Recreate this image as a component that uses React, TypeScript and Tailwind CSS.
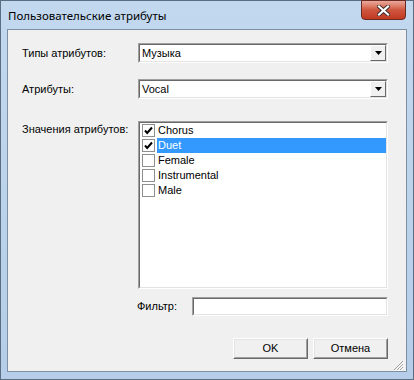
import React from "react";

const F = { fontFamily: '"Liberation Sans", Arial, sans-serif' };

function Sunken({ className = "", children }: { className?: string; children?: React.ReactNode }) {
  return (
    <div className={"border border-t-[#a0a0a0] border-l-[#a0a0a0] border-b-white border-r-white " + className}>
      <div className="h-full w-full border border-t-[#696969] border-l-[#696969] border-b-[#e3e3e3] border-r-[#e3e3e3] bg-white">
        {children}
      </div>
    </div>
  );
}

function Combo({ value }: { value: string }) {
  return (
    <Sunken className="h-[20px] w-[250px]">
      <div className="flex h-full items-center">
        <div className="flex-1 pl-[2px] text-[11px] text-black" style={F}>{value}</div>
        <div className="flex h-full w-[16px] items-center justify-center border border-t-white border-l-white border-b-[#696969] border-r-[#696969] bg-[#f0f0f0]">
          <svg width="7" height="4" viewBox="0 0 7 4"><path d="M0 0h7L3.5 4z" fill="#000" /></svg>
        </div>
      </div>
    </Sunken>
  );
}

function Check({ checked }: { checked: boolean }) {
  return (
    <div className="flex h-[13px] w-[13px] items-center justify-center border border-[#8e8f8f] bg-white">
      {checked && (
        <svg width="9" height="9" viewBox="0 0 9 9">
          <path d="M1 4.5L3.2 7L8 1.5" stroke="#000" strokeWidth="2" fill="none" />
        </svg>
      )}
    </div>
  );
}

function Button({ label }: { label: string }) {
  return (
    <div className="h-[21px] w-[75px] border border-t-white border-l-white border-b-[#696969] border-r-[#696969]">
      <div className="flex h-full w-full items-center justify-center border border-t-[#e3e3e3] border-l-[#e3e3e3] border-b-[#a0a0a0] border-r-[#a0a0a0] bg-[#f0f0f0] text-[11px] text-black" style={F}>
        {label}
      </div>
    </div>
  );
}

export default function App() {
  const items = [
    { t: "Chorus", c: true, s: false },
    { t: "Duet", c: true, s: true },
    { t: "Female", c: false, s: false },
    { t: "Instrumental", c: false, s: false },
    { t: "Male", c: false, s: false },
  ];
  return (
    <div className="flex h-[380px] w-[414px] flex-col border border-[#5b6d80] bg-gradient-to-b from-[#c2d8ef] via-[#bcd3ec] to-[#b5cde8]">
      <div className="relative flex h-[28px] items-start">
        <div className="pl-[7px] pt-[6px] text-[11.5px] text-black" style={{ fontFamily: '"Noto Sans", "Open Sans", sans-serif' }}>
          Пользовательские атрибуты
        </div>
        <div className="absolute right-[7px] top-[-1px] flex h-[20px] w-[45px] items-center justify-center rounded-b-[4px] border border-[#6b2a22] bg-gradient-to-b from-[#e9a99b] via-[#d0553e] to-[#c0391f]">
          <svg width="13" height="11" viewBox="0 0 13 11">
            <path d="M2 1.5L11 9.5M11 1.5L2 9.5" stroke="#3a2a2a" strokeWidth="4" strokeLinecap="square" />
            <path d="M2 1.5L11 9.5M11 1.5L2 9.5" stroke="#fff" strokeWidth="2.2" strokeLinecap="square" />
          </svg>
        </div>
      </div>
      <div className="mx-[6px] h-[343px] border border-[#7d8fa3] bg-[#f0f0f0]">
        <div className="flex flex-col pl-[14px] text-[11px] text-black" style={F}>
          <div className="mt-[13px] flex h-[20px] items-center">
            <div className="w-[116px]">Типы атрибутов:</div>
            <Combo value="Музыка" />
          </div>
          <div className="mt-[16px] flex h-[20px] items-center">
            <div className="w-[116px]">Атрибуты:</div>
            <Combo value="Vocal" />
          </div>
          <div className="mt-[22px] flex items-start">
            <div className="w-[116px]">Значения атрибутов:</div>
            <Sunken className="h-[168px] w-[250px]">
              <div className="flex flex-col">
                {items.map((it) => (
                  <div key={it.t} className="flex h-[15px] items-center">
                    <div className="ml-[2px] mr-[2px]">
                      <Check checked={it.c} />
                    </div>
                    <div className={"flex h-[15px] flex-1 items-center pl-[1px] " + (it.s ? "bg-[#3399ff] text-white" : "text-black")}>
                      {it.t}
                    </div>
                  </div>
                ))}
              </div>
            </Sunken>
          </div>
          <div className="mt-[8px] flex h-[19px] items-center">
            <div className="ml-[115px] w-[55px]">Фильтр:</div>
            <Sunken className="h-[19px] w-[196px]" />
          </div>
          <div className="mt-[22px] flex justify-end gap-[5px] pr-[18px]">
            <Button label="OK" />
            <Button label="Отмена" />
          </div>
          <div className="flex justify-end pr-[2px] pt-[1px]">
            <svg width="11" height="11" viewBox="0 0 11 11">
              <path d="M10 1L1 10M10 4L4 10M10 7L7 10" stroke="#a0a0a0" strokeWidth="1" />
              <path d="M11 2L2 11M11 5L5 11M11 8L8 11" stroke="#ffffff" strokeWidth="1" />
            </svg>
          </div>
        </div>
      </div>
    </div>
  );
}
